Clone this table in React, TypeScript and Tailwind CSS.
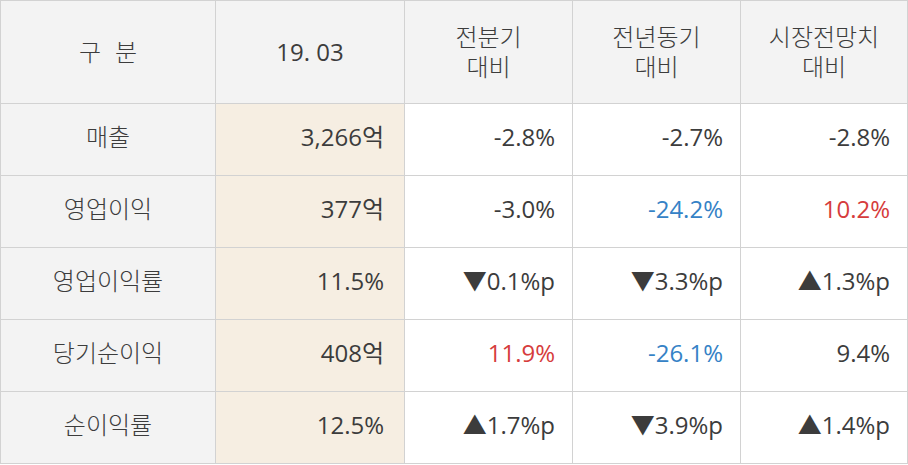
const HEAD = ["전분기\n대비", "전년동기\n대비", "시장전망치\n대비"];

type Cell = { v: string; c?: "red" | "blue" };

const ROWS: { label: string; value: string; cells: Cell[] }[] = [
  { label: "매출", value: "3,266억", cells: [{ v: "-2.8%" }, { v: "-2.7%" }, { v: "-2.8%" }] },
  { label: "영업이익", value: "377억", cells: [{ v: "-3.0%" }, { v: "-24.2%", c: "blue" }, { v: "10.2%", c: "red" }] },
  { label: "영업이익률", value: "11.5%", cells: [{ v: "▼0.1%p" }, { v: "▼3.3%p" }, { v: "▲1.3%p" }] },
  { label: "당기순이익", value: "408억", cells: [{ v: "11.9%", c: "red" }, { v: "-26.1%", c: "blue" }, { v: "9.4%" }] },
  { label: "순이익률", value: "12.5%", cells: [{ v: "▲1.7%p" }, { v: "▼3.9%p" }, { v: "▲1.4%p" }] },
];

const colorClass = (c?: "red" | "blue") =>
  c === "red" ? "text-[#d63c3c]" : c === "blue" ? "text-[#3582c6]" : "text-[#3c3c3c]";

export default function App() {
  return (
    <div className="w-[908px] h-[465px] bg-white font-['Open_Sans','Noto_Sans_CJK_KR',sans-serif] font-[370] text-[24px] text-[#3c3c3c]">
      <table className="border-collapse table-fixed w-[907px]">
        <colgroup>
          <col className="w-[215px]" />
          <col className="w-[189px]" />
          <col className="w-[168px]" />
          <col className="w-[168px]" />
          <col className="w-[167px]" />
        </colgroup>
        <thead>
          <tr className="h-[103px] bg-[#f3f3f3]">
            <th className="border border-[#d2d2d2] font-light text-center">
              <span className="inline-flex gap-[14px]">
                <span>구</span>
                <span>분</span>
              </span>
            </th>
            <th className="border border-[#d2d2d2] font-[370] text-center">19. 03</th>
            {HEAD.map((h) => (
              <th
                key={h}
                className="border border-[#d2d2d2] font-light text-center leading-[30px] whitespace-pre-line align-middle"
              >
                {h}
              </th>
            ))}
          </tr>
        </thead>
        <tbody>
          {ROWS.map((r) => (
            <tr key={r.label} className="h-[72px]">
              <td className="border border-[#d2d2d2] bg-[#f3f3f3] text-center font-light pb-[5px]">{r.label}</td>
              <td className="border border-[#d2d2d2] bg-[#f6eee2] text-right pr-[20px] pb-[5px]">{r.value}</td>
              {r.cells.map((c, i) => (
                <td key={i} className={`border border-[#d2d2d2] text-right pr-[17px] pb-[5px] ${colorClass(c.c)}`}>
                  {c.v}
                </td>
              ))}
            </tr>
          ))}
        </tbody>
      </table>
    </div>
  );
}
